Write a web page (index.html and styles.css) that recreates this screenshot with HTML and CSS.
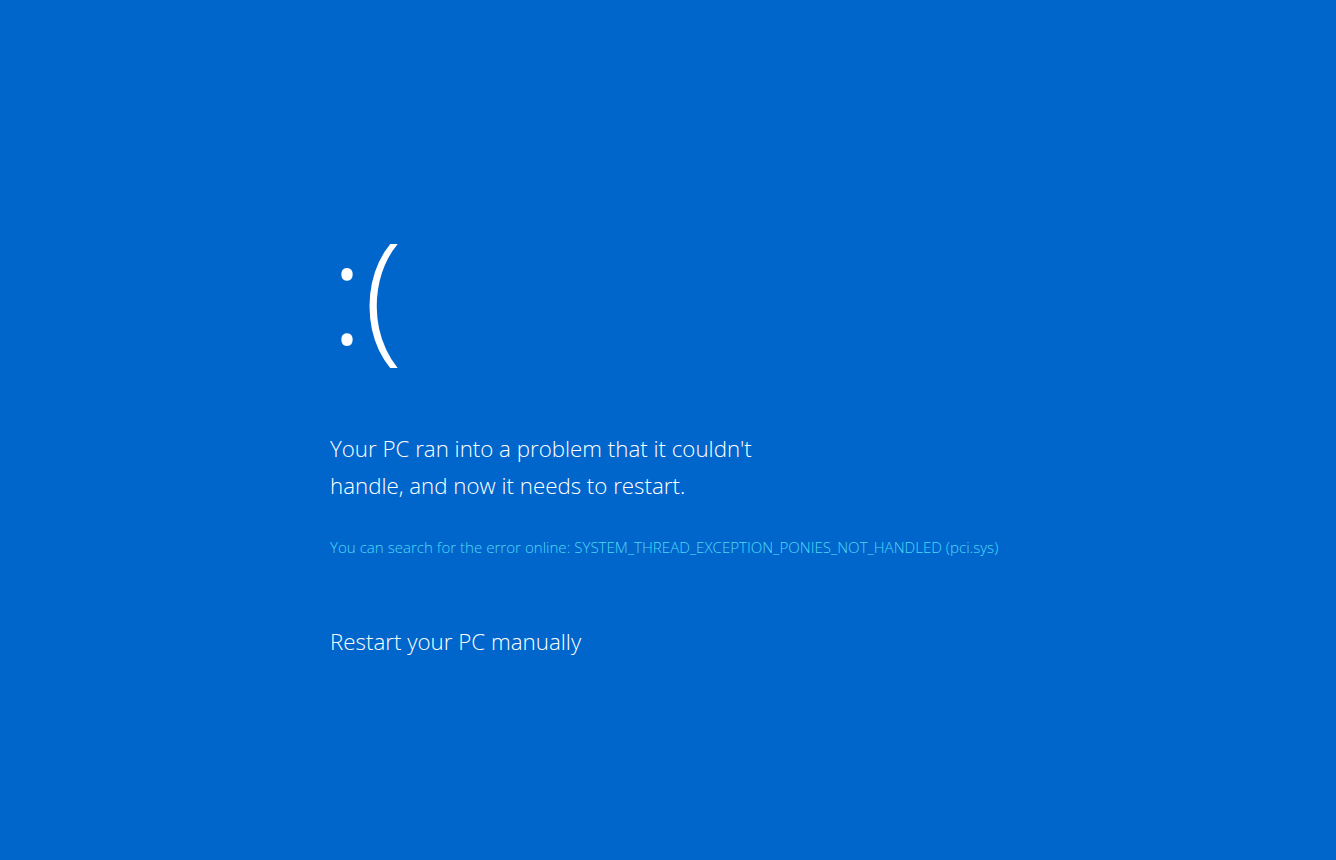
FILE: index.html
```html
<!DOCTYPE html>
<html lang="en">
<head>
<meta charset="utf-8">
<title>Your PC ran into a problem</title>
<link rel="stylesheet" href="styles.css">
</head>
<body>
<main class="bsod">
  <div class="frown">:(</div>
  <p class="message">Your PC ran into a problem that it couldn't<br>handle, and now it needs to restart.</p>
  <p class="detail">You can search for the error online: SYSTEM_THREAD_EXCEPTION_PONIES_NOT_HANDLED (pci.sys)</p>
  <p class="restart">Restart your PC manually</p>
</main>
</body>
</html>
```
FILE: styles.css
```css
html, body {
  margin: 0;
  padding: 0;
  height: 100%;
}
body {
  background: #0066cc;
  color: #ffffff;
  font-family: "Open Sans", "Noto Sans", sans-serif;
  font-weight: 300;
  overflow: hidden;
}
.bsod {
  padding: 210px 0 0 330px;
  display: flex;
  flex-direction: column;
  align-items: flex-start;
}
.frown {
  font-size: 142px;
  line-height: 160px;
  height: 160px;
}
.message {
  margin: 60px 0 0 0;
  font-size: 22.3px;
  line-height: 37px;
}
.detail {
  margin: 33px 0 0 0;
  font-size: 15.1px;
  line-height: 20px;
  color: #52d6f7;
}
.restart {
  margin: 70px 0 0 0;
  font-size: 22.35px;
  line-height: 30px;
}
```
